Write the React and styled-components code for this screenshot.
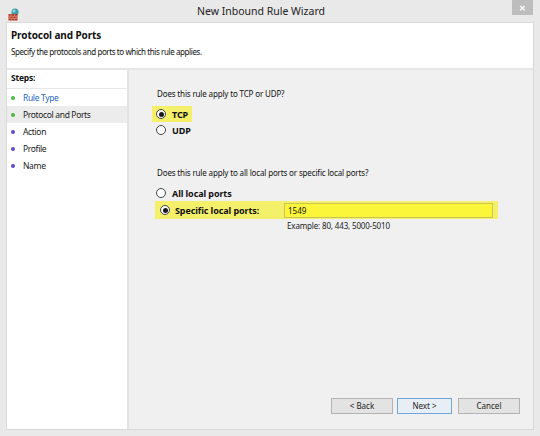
import React from "react";
import styled, { createGlobalStyle } from "styled-components";

const GlobalStyle = createGlobalStyle`
  html, body {
    margin: 0;
    padding: 0;
    background: #e9e9e9;
  }
  * {
    box-sizing: border-box;
  }
`;

const steps = [
    { name: "Rule Type", done: true, link: true },
    { name: "Protocol and Ports", done: true, active: true },
    { name: "Action" },
    { name: "Profile" },
    { name: "Name" },
];

const FirewallIcon = () => (
    <svg width="12" height="13" viewBox="0 0 12 13">
        <circle cx="7" cy="4" r="3.6" fill="#3a9ea8" />
        <circle cx="6" cy="3" r="1.6" fill="#8fd6dc" />
        <rect x="0.5" y="6" width="9" height="6.5" fill="#b23a2a" />
        <path d="M0.5 8.2h9M0.5 10.4h9M3 6v2.2M6.5 6v2.2M2 8.2v2.2M5 8.2v2.2M8 8.2v2.2M3.5 10.4v2.1M6.5 10.4v2.1" stroke="#e9a08a" strokeWidth="0.6" />
    </svg>
);

const Radio = ({ checked }) => (
    <RadioCircle>
        {checked && <RadioDot />}
    </RadioCircle>
);

const App = () => {
    return (
        <>
            <GlobalStyle />
            <Window>
                <TitleBar>
                    <IconSlot>
                        <FirewallIcon />
                    </IconSlot>
                    <Title>New Inbound Rule Wizard</Title>
                    <CloseButton>✕</CloseButton>
                </TitleBar>
                <Frame>
                    <Header>
                        <HeaderTitle>Protocol and Ports</HeaderTitle>
                        <HeaderText>
                            Specify the protocols and ports to which this rule applies.
                        </HeaderText>
                    </Header>
                    <Main>
                        <Sidebar>
                            <StepsTitle>Steps:</StepsTitle>
                            {steps.map((step) => (
                                <StepRow key={step.name} active={step.active}>
                                    <Bullet done={step.done} />
                                    <StepName link={step.link}>{step.name}</StepName>
                                </StepRow>
                            ))}
                        </Sidebar>
                        <Content>
                            <Question>Does this rule apply to TCP or UDP?</Question>
                            <OptionRow highlight>
                                <Radio checked />
                                <OptionLabel>TCP</OptionLabel>
                            </OptionRow>
                            <OptionRow>
                                <Radio />
                                <OptionLabel>UDP</OptionLabel>
                            </OptionRow>

                            <Question second>
                                Does this rule apply to all local ports or specific local ports?
                            </Question>
                            <OptionRow>
                                <Radio />
                                <OptionLabel>All local ports</OptionLabel>
                            </OptionRow>
                            <PortsRow>
                                <Radio checked />
                                <PortsLabel>Specific local ports:</PortsLabel>
                                <PortsInput>1549</PortsInput>
                            </PortsRow>
                            <Example>Example: 80, 443, 5000-5010</Example>

                            <Footer>
                                <Button>&lt; Back</Button>
                                <Button primary>Next &gt;</Button>
                                <Button cancel>Cancel</Button>
                            </Footer>
                        </Content>
                    </Main>
                </Frame>
            </Window>
        </>
    );
};

export default App;

const Window = styled.div`
    width: 540px;
    height: 436px;
    background: #e9e9e9;
    display: flex;
    flex-direction: column;
    font-family: "Noto Sans", "Open Sans", sans-serif;
    color: #111;
`;

const TitleBar = styled.div`
    height: 22px;
    display: flex;
    align-items: flex-start;
`;

const IconSlot = styled.div`
    width: 22px;
    padding: 4px 0 0 8px;
`;

const Title = styled.div`
    flex: 1;
    text-align: center;
    font-size: 10.5px;
    line-height: 22px;
    color: #222;
    padding-right: 12px;
`;

const CloseButton = styled.div`
    width: 21px;
    height: 15px;
    margin-right: 7px;
    background: #bdbdbd;
    color: #fff;
    font-size: 8px;
    font-weight: bold;
    display: flex;
    align-items: center;
    justify-content: center;
`;

const Frame = styled.div`
    flex: 1;
    margin: 0 6px 6px;
    border: 1px solid #d9d9d9;
    display: flex;
    flex-direction: column;
    background: #fff;
`;

const Header = styled.div`
    height: 47px;
    background: #fff;
    padding: 5px 0 0 4px;
    border-bottom: 2px solid #e6e6e6;
`;

const HeaderTitle = styled.div`
    font-size: 10px;
    font-weight: bold;
    line-height: 14px;
    letter-spacing: -0.1px;
`;

const HeaderText = styled.div`
    font-size: 8px;
    line-height: 10px;
    margin-top: 5px;
    letter-spacing: -0.4px;
`;

const Main = styled.div`
    flex: 1;
    display: flex;
`;

const Sidebar = styled.div`
    width: 122px;
    background: #fff;
    border-right: 2px solid #e3e3e3;
`;

const StepsTitle = styled.div`
    height: 19px;
    font-size: 8.5px;
    font-weight: bold;
    line-height: 16px;
    padding-left: 4px;
    border-bottom: 1px solid #e8e8e8;
    letter-spacing: -0.2px;
`;

const StepRow = styled.div`
    height: 17px;
    display: flex;
    align-items: center;
    padding-left: 4px;
    background: ${({ active }) => (active ? "#ececec" : "transparent")};
`;

const Bullet = styled.span`
    width: 4px;
    height: 4px;
    border-radius: 50%;
    background: ${({ done }) => (done ? "#4cb83f" : "#5a4fc4")};
    margin-right: 8px;
`;

const StepName = styled.span`
    font-size: 8.5px;
    color: ${({ link }) => (link ? "#2a67c0" : "#222")};
    letter-spacing: -0.35px;
`;

const Content = styled.div`
    flex: 1;
    background: #f0f0f0;
    padding: 18px 0 0 23px;
    display: flex;
    flex-direction: column;
    align-items: flex-start;
`;

const Question = styled.div`
    font-size: 8px;
    line-height: 11px;
    padding-left: 5px;
    letter-spacing: -0.15px;
    margin-top: ${({ second }) => (second ? "29px" : "0")};
    margin-bottom: 7px;
`;

const OptionRow = styled.div`
    height: 16px;
    display: flex;
    align-items: center;
    padding: 0 4px 0 4px;
    background: ${({ highlight }) => (highlight ? "#f5f06a" : "transparent")};
`;

const RadioCircle = styled.span`
    width: 10px;
    height: 10px;
    border-radius: 50%;
    border: 1px solid #444;
    background: #fff;
    display: inline-flex;
    align-items: center;
    justify-content: center;
    flex-shrink: 0;
`;

const RadioDot = styled.span`
    width: 5px;
    height: 5px;
    border-radius: 50%;
    background: #1a1a1a;
`;

const OptionLabel = styled.span`
    font-size: 9px;
    font-weight: bold;
    margin-left: 6px;
    letter-spacing: -0.1px;
`;

const PortsRow = styled.div`
    height: 18px;
    display: flex;
    align-items: center;
    padding: 0 5px 0 5px;
    margin-left: 3px;
    background: #f5f06a;
`;

const PortsLabel = styled.span`
    width: 109px;
    font-size: 9px;
    font-weight: bold;
    margin-left: 5px;
    letter-spacing: -0.1px;
`;

const PortsInput = styled.div`
    width: 209px;
    height: 15px;
    border: 1px solid #c9c35a;
    background: #fbf63a;
    font-size: 8px;
    line-height: 13px;
    padding-left: 3px;
`;

const Example = styled.div`
    font-size: 8px;
    line-height: 10px;
    margin: 2px 0 0 135px;
    letter-spacing: -0.15px;
    color: #222;
`;

const Footer = styled.div`
    margin-top: auto;
    align-self: flex-end;
    display: flex;
    gap: 4px;
    padding: 0 13px 15px 0;
`;

const Button = styled.div`
    width: ${({ primary }) => (primary ? "55px" : "62px")};
    margin-left: ${({ cancel }) => (cancel ? "2px" : "0")};
    height: 16px;
    border: 1px solid ${({ primary }) => (primary ? "#6fa6dc" : "#b3b3b3")};
    background: ${({ primary }) => (primary ? "#e8eef5" : "#e3e3e3")};
    font-size: 8px;
    line-height: 14px;
    text-align: center;
    color: #222;
`;
